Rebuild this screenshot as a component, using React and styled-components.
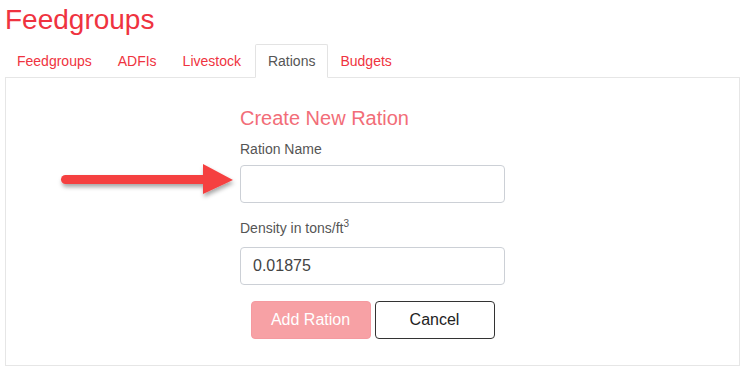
import React from 'react';
import styled, { createGlobalStyle } from 'styled-components';

const GlobalStyle = createGlobalStyle`
  body {
    margin: 0;
    background: #fff;
    font-family: "Liberation Sans", Arial, sans-serif;
  }
`;

const Page = styled.div`
  padding: 0 5px;
  width: 745px;
  box-sizing: border-box;
`;

const Title = styled.h1`
  margin: 5px 0 8px;
  font-size: 28px;
  font-weight: 400;
  line-height: 1.1;
  color: #ef3340;
`;

const Tabs = styled.ul`
  display: flex;
  list-style: none;
  margin: 0 0 -1px;
  padding: 0;
  position: relative;
  z-index: 1;
`;

const Tab = styled.li`
  margin-right: ${({ $active }) => ($active ? 0 : 2)}px;
  padding: ${({ $active }) => ($active ? '6px 12px' : '7px 12px')};
  font-size: 14px;
  line-height: 20px;
  border: ${({ $active }) => ($active ? '1px solid #e3e3e3' : 'none')};
  border-bottom-color: #fff;
  background: ${({ $active }) => ($active ? '#fff' : 'transparent')};
  color: ${({ $active }) => ($active ? '#555' : '#ef3340')};
  border-radius: 2px 2px 0 0;
`;

const Panel = styled.div`
  position: relative;
  border: 1px solid #e6e6e6;
  padding: 29px 0 26px;
  display: flex;
  justify-content: center;
`;

const Form = styled.div`
  width: 265px;
  display: flex;
  flex-direction: column;
`;

const Heading = styled.h3`
  margin: 0 0 10px;
  font-size: 20px;
  font-weight: 400;
  line-height: 1.1;
  color: #f26d78;
`;

const Label = styled.label`
  font-size: 14px;
  line-height: 20px;
  color: #555;
  margin-bottom: ${({ $gap }) => $gap || 6}px;

  sup {
    font-size: 10px;
    line-height: 0;
  }
`;

const Input = styled.input`
  box-sizing: border-box;
  height: 38px;
  width: 100%;
  padding: 0 12px;
  border: 1px solid #ccd0d6;
  border-radius: 4px;
  font-family: inherit;
  font-size: 16px;
  color: #444;
  margin-bottom: ${({ $gap }) => $gap}px;
  outline: none;
`;

const Buttons = styled.div`
  display: flex;
  justify-content: center;
  gap: 4px;
`;

const Button = styled.button`
  box-sizing: border-box;
  width: 120px;
  height: 38px;
  border-radius: 4px;
  font-family: inherit;
  font-size: 16px;
  border: 1px solid ${({ $primary }) => ($primary ? '#f59aa0' : '#333')};
  background: ${({ $primary }) => ($primary ? '#f7a1a5' : '#fff')};
  color: ${({ $primary }) => ($primary ? '#fff' : '#222')};
`;

const Arrow = styled.svg`
  position: absolute;
  left: 50px;
  top: 82px;
  overflow: visible;
`;

const tabs = ['Feedgroups', 'ADFIs', 'Livestock', 'Rations', 'Budgets'];

export default function App() {
  return (
    <Page>
      <GlobalStyle />
      <Title>Feedgroups</Title>
      <Tabs>
        {tabs.map((t) => (
          <Tab key={t} $active={t === 'Rations'}>
            {t}
          </Tab>
        ))}
      </Tabs>
      <Panel>
        <Arrow width="184" height="42" viewBox="0 0 184 42">
          <defs>
            <filter id="sh" x="-10%" y="-30%" width="120%" height="180%">
              <feDropShadow dx="1" dy="3" stdDeviation="2" floodColor="#000" floodOpacity="0.35" />
            </filter>
          </defs>
          <g filter="url(#sh)" fill="#f54141">
            <rect x="5" y="15" width="146" height="9" rx="4.5" />
            <polygon points="147,4 177,20 147,34" />
          </g>
        </Arrow>
        <Form>
          <Heading>Create New Ration</Heading>
          <Label>Ration Name</Label>
          <Input $gap={15} />
          <Label $gap={9}>
            Density in tons/ft<sup>3</sup>
          </Label>
          <Input $gap={16} defaultValue="0.01875" />
          <Buttons>
            <Button $primary>Add Ration</Button>
            <Button>Cancel</Button>
          </Buttons>
        </Form>
      </Panel>
    </Page>
  );
}
